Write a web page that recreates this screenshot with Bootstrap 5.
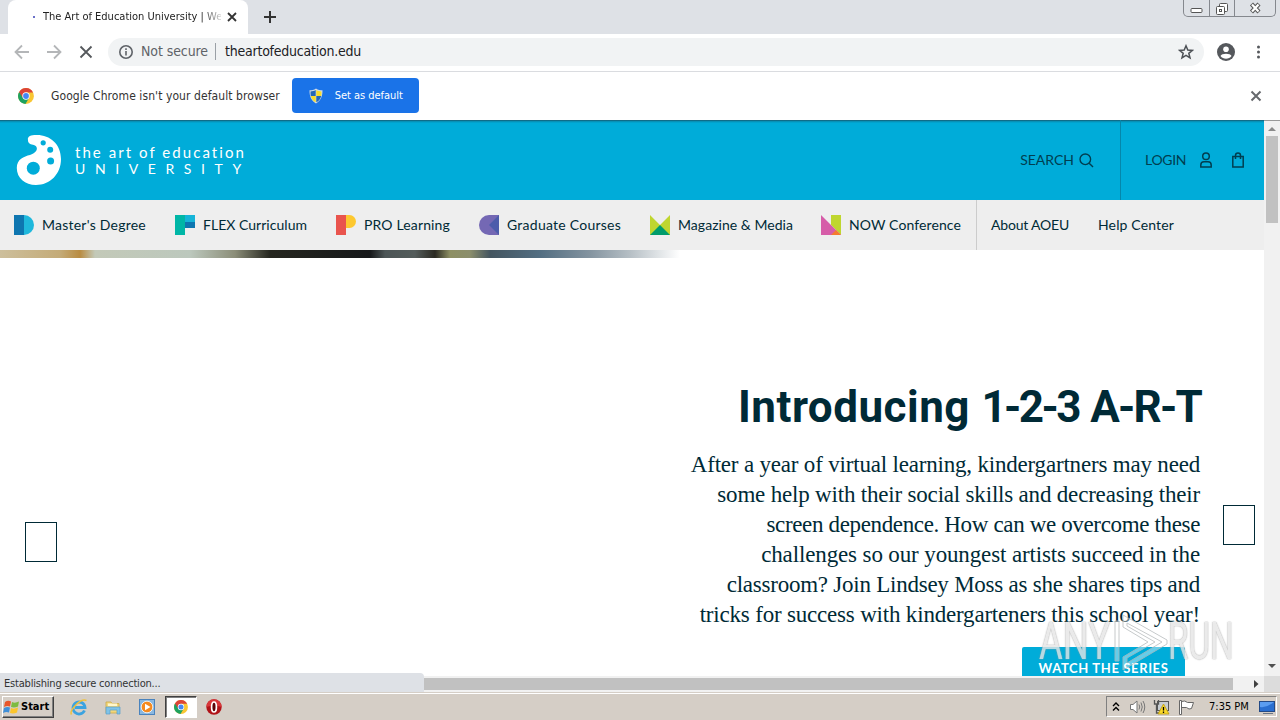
<!DOCTYPE html>
<html lang="en">
<head>
    <meta charset="UTF-8">
    <meta name="viewport" content="width=device-width, initial-scale=1.0">
    <title>The Art of Education University</title>
    <link href="https://cdn.jsdelivr.net/npm/bootstrap@5.3.0/dist/css/bootstrap.min.css" rel="stylesheet">
    <style>
        body {
            width: 1280px;
            height: 720px;
            overflow: hidden;
            background: #fff;
            font-family: "DejaVu Sans Condensed", "DejaVu Sans", sans-serif;
            font-size: 11px;
            line-height: 1.2;
            color: #222;
            white-space: nowrap;
        }
        svg { display: block; flex-shrink: 0; }

        /* browser window */
        .tab-strip { height: 34px; background: #dee1e6; }
        .browser-tab {
            width: 240px; height: 34px; margin-left: 8px; padding: 0 11px 0 25px;
            background: #fff; border-radius: 8px 8px 0 0;
        }
        .spinner-dot { width: 2px; height: 2px; background: #6a70c8; margin-right: 8px; }
        .tab-title {
            width: 178px; letter-spacing: 0;
            -webkit-mask-image: linear-gradient(90deg, #000 158px, transparent 182px);
        }
        .new-tab { margin: 11px 0 0 16px; }
        .win-buttons { height: 17px; width: 93px; margin-right: 4px; border: 1px solid #85888e; border-top: 0; border-radius: 0 0 5px 5px; }
        .win-buttons > div { display: flex; align-items: center; justify-content: center; width: 25px; }
        .win-buttons > div + div { border-left: 1px solid #85888e; }
        .win-buttons > div:last-child { flex: 1; }
        .tool-bar { height: 38px; border-bottom: 1px solid #dadce0; padding: 0 15px 2px 14px; }
        .address-bar { width: 1096px; height: 28px; border-radius: 14px; background: #f1f3f4; font-size: 14px; margin-left: 14px; padding: 0 10px; }
        .address-state { color: #5f6368; letter-spacing: -.09px; margin-left: 7px; padding-right: 7px; border-right: 1px solid #9aa0a6; }
        .address-url { color: #202124; letter-spacing: -.23px; margin-left: 9px; }
        .info-bar { height: 48px; font-size: 12px; padding: 0 18px 1px; letter-spacing: .08px; color: #333; }
        .info-bar span { margin-top: 1px; }
        .btn-default-browser {
            width: 127px; height: 35px; background: #1a73e8; color: #fff; border-radius: 4px;
            font-size: 11px; padding: 0 16px; margin-left: 12px; letter-spacing: -.04px;
        }

        /* page */
        .site-head {
            height: 80px; background: #00acd9; color: #003e50;
            box-shadow: inset 0 1px #106c88, inset 0 2px #0791b7, inset 0 3px #02a2cd;
            font-family: Lato, sans-serif; font-size: 14px; line-height: 17px; padding-left: 16px;
        }
        .brand-name { margin-left: 13px; color: #fff; padding-top: 1px; }
        .brand-top { letter-spacing: 2.05px; font-size: 15px; line-height: 17px; }
        .brand-bottom { letter-spacing: 9.6px; line-height: 16px; }
        .head-login { width: 144px; border-left: 1px solid #0587ab; padding-left: 24px; letter-spacing: -.3px; }
        .head-login span, .head-search span { margin-top: -1px; }
        .site-nav {
            height: 50px; background: #eee; color: #002a36; padding-left: 14px;
            font-family: Lato, sans-serif; font-size: 14px; line-height: 18px;
        }
        .site-nav a { color: inherit; text-decoration: none; display: flex; align-items: center; gap: 8px; margin-right: 29px; }
        .site-nav span { display: block; }
        .nav-masters { width: 104px; letter-spacing: .234px; }
        .nav-flex { width: 104px; letter-spacing: .03px; }
        .nav-pro { width: 86px; letter-spacing: .145px; }
        .nav-graduate { width: 114px; letter-spacing: .246px; }
        .nav-magazine { width: 114px; letter-spacing: .04px; }
        .nav-now { width: 113px; letter-spacing: .105px; }
        .nav-about { width: 78px; letter-spacing: -.2px; }
        .nav-help { letter-spacing: .146px; }
        .nav-rule { width: 1px; align-self: stretch; background: #ccc; margin: 0 14px 0 -15px; }
        .hero-strip {
            height: 8px;
            background: linear-gradient(90deg, #cdbf9c 0, #c4ab78 60px, #b98c42 80px, #c3c9b8 95px, #bcc8bd 190px, #8b8d78 235px, #25261f 270px, #16181a 370px, #4c5556 385px, #545c5b 415px, #2b2a22 435px, #8d8f63 450px, #8b8e6c 470px, #445560 490px, #536e82 540px, #8494a0 590px, #b6bfc5 630px, #fff 680px);
        }
        .hero-area { color: #002a36; height: 418px; overflow: hidden; padding-left: 25px; }
        .hero-title { font-family: Roboto, sans-serif; font-weight: 700; font-size: 44px; line-height: 50px; letter-spacing: .5px; margin: 124px 0 18px; }
        .title-digits { letter-spacing: -2.6px; }
        .title-letters { letter-spacing: -1.8px; margin-right: -1px; }
        .hero-text { font-family: "Liberation Serif", serif; font-size: 23px; line-height: 30px; letter-spacing: -.19px; margin-bottom: 17px; }
        .hero-text span { display: block; }
        .hero-text span:nth-child(3) { letter-spacing: -.35px; }
        .hero-text span:nth-child(4) { letter-spacing: -.13px; }
        .hero-text span:nth-child(5) { letter-spacing: -.24px; }
        .slide-arrow { width: 32px; height: 40px; border: 1px solid #002a36; }
        .slide-prev { margin-top: 264px; }
        .slide-next { margin: 247px 9px 0 23px; }
        .btn-series {
            width: 163px; height: 42px; background: #00acd9; color: #fff; border-radius: 2px; margin-right: 15px;
            font: 700 13px/43px Lato, sans-serif; letter-spacing: .63px; text-align: center;
        }
        .v-scroll { width: 16px; background: #f1f1f1; padding: 5px 0 7px; border-top: 1px solid #999; }
        .v-thumb { width: 12px; height: 87px; background: #c1c1c1; margin-top: 5px; }
        .h-scroll { height: 16px; background: #f1f1f1; }
        .h-thumb { width: 809px; height: 12px; background: #c1c1c1; margin-left: 424px; }
        .scroll-corner { width: 16px; height: 16px; background: #dcdcdc; margin-left: 5px; }
        .status-bubble { left: 0; top: 673px; width: 424px; height: 19px; background: #dee1e6; border-radius: 0 4px 0 0; padding: 4px; color: #333; letter-spacing: -.2px; }

        /* recorder watermark over the page */
        .recorder-mark { left: 1039px; top: 613px; height: 58px; opacity: .8; }
        .recorder-word {
            font: 400 52px/58px Roboto, sans-serif; color: rgba(255, 255, 255, .75);
            text-shadow: 0 0 2px #999, 0 0 1px #aaa; transform-origin: 0 50%;
        }
        .recorder-any { width: 75px; transform: scaleX(.7); }
        .recorder-run { width: 66px; transform: scaleX(.64); }

        /* desktop */
        .task-bar { height: 28px; background: #d5cec6; border-top: 1px solid #d5cec6; box-shadow: inset 0 1px #fff; color: #000; padding: 3px 3px 0 2px; }
        .start-button { width: 52px; height: 22px; border: 1px solid; border-color: #fff #404040 #404040 #fff; box-shadow: inset -1px -1px #808080; font-weight: 700; gap: 1px; }
        .quick-launch { height: 22px; margin-left: 16px; gap: 16px; }
        .task-active { width: 32px; height: 22px; margin: 0 9px; background: #fff; border: 1px solid; border-color: #404040 #fff #fff #404040; box-shadow: inset 1px 1px #808080; }
        .tray { width: 171px; height: 21px; border: 1px solid; border-color: #808080 #fff #fff #808080; padding: 0 0 0 5px; }
        .tray-clock { width: 41px; margin: 0 9px 0 14px; }
    </style>
</head>
<body class="d-flex flex-column">

<!-- Shared drawings -->
<svg width="0" height="0" class="position-absolute">
    <symbol id="chrome-logo" viewBox="0 0 20 20">
        <circle cx="10" cy="10" r="9.900" fill="#f9c633"/>
        <path d="M10 10 1.400 5A9.900 9.900 0 0 0 9.300 19.900L14 12.300Z" fill="#1da260"/>
        <path d="M10 5.500H18.800A9.900 9.900 0 0 0 1.400 5L6 12.300Z" fill="#dc4437"/>
        <circle cx="10" cy="10" r="4.600" fill="#fff"/>
        <circle cx="10" cy="10" r="3.600" fill="#4587f3"/>
    </symbol>
</svg>

<!-- Tab strip -->
<div class="tab-strip d-flex align-items-start">
    <div class="browser-tab d-flex align-items-center">
        <div class="spinner-dot"></div>
        <div class="tab-title">The Art of Education University | We</div>
        <svg class="ms-auto" width="10" height="10" stroke="#333" stroke-width="1.800"><path d="M1 1 9 9M9 1 1 9"/></svg>
    </div>
    <svg class="new-tab" width="12" height="12" stroke="#333" stroke-width="2"><path d="M6 0V12M0 6H12"/></svg>
    <div class="win-buttons d-flex ms-auto">
        <div><svg width="13" height="16" fill="#fff" stroke="#555"><rect x="1" y="8.500" width="11" height="4" rx="1"/></svg></div>
        <div><svg width="14" height="15" fill="#fff" stroke="#555"><rect x="4.500" y="2.500" width="8" height="8" rx="1"/><rect x="1.500" y="5.500" width="8" height="8" rx="1"/><rect x="4.500" y="8.500" width="2" height="2"/></svg></div>
        <div><svg width="13" height="14"><path d="M2.500 3 10 11M10 3 2.500 11" stroke="#555" stroke-width="4.200"/><path d="M3 3.500 9.500 10.500M9.500 3.500 3 10.500" stroke="#fff" stroke-width="2.200"/></svg></div>
    </div>
</div>

<!-- Toolbar -->
<div class="tool-bar d-flex align-items-center">
    <svg width="16" height="16" fill="none" stroke="#b4b6b8" stroke-width="1.800"><path d="M15 8H2M8 1.500 1.500 8 8 14.500"/></svg>
    <svg class="ms-3" width="16" height="16" fill="none" stroke="#b4b6b8" stroke-width="1.800"><path d="M1 8H14M8 1.500 14.500 8 8 14.500"/></svg>
    <svg class="ms-3" width="16" height="16" stroke="#55585c" stroke-width="1.800"><path d="M2.500 2.500 13.500 13.500M13.500 2.500 2.500 13.500"/></svg>
    <div class="address-bar d-flex align-items-center">
        <svg width="16" height="16" fill="none" stroke="#5f6368" stroke-width="1.600"><circle cx="8" cy="8" r="6.200"/><path d="M8 7V11.500M8 4.300V5.900"/></svg>
        <span class="address-state">Not secure</span>
        <span class="address-url">theartofeducation.edu</span>
        <svg class="ms-auto" width="16" height="16" fill="none" stroke="#4d5156" stroke-width="1.500"><path d="M8 1.800 9.800 6.100 14.300 6.400 10.800 9.300 12 13.800 8 11.300 4 13.800 5.200 9.300 1.700 6.400 6.200 6.100Z"/></svg>
    </div>
    <svg style="margin-left: 13px" width="18" height="18"><circle cx="9" cy="9" r="9" fill="#55585c"/><circle cx="9" cy="6.300" r="2.800" fill="#fff"/><path d="M3.500 13C4.500 10 13.500 10 14.500 13 12 16.500 6 16.500 3.500 13Z" fill="#fff"/></svg>
    <svg class="ms-auto" width="12" height="16" fill="#55585c"><circle cx="5.500" cy="3" r="1.500"/><circle cx="5.500" cy="8" r="1.500"/><circle cx="5.500" cy="13" r="1.500"/></svg>
</div>

<!-- Default browser prompt -->
<div class="info-bar d-flex align-items-center">
    <svg width="16" height="16" class="me-3"><use href="#chrome-logo"/></svg>
    <span style="margin-left: 1px">Google Chrome isn't your default browser</span>
    <div class="btn-default-browser d-flex align-items-center">
        <svg width="16" height="16"><path d="M8 .500C6 2 3.500 2.300 1.500 2.300 1.500 8.500 3 12.500 8 15.500 13 12.500 14.500 8.500 14.500 2.300 12.500 2.300 10 2 8 .500Z" fill="#cfdbe6"/><path d="M8.300 2V8H13.200C13.500 6.500 13.500 5 13.400 3.500 11.500 3.400 10 3 8.300 2ZM7.700 8H2.800C3.500 11 5 13 7.700 14.300Z" fill="#2467b8" transform="matrix(-1 0 0 1 16 0)"/><path d="M8.300 2V8H13.200C13.500 6.500 13.500 5 13.400 3.500 11.500 3.400 10 3 8.300 2ZM7.700 8H2.800C3.500 11 5 13 7.700 14.300Z" fill="#f8dc2c"/></svg>
        <span style="margin-left: 11px">Set as default</span>
    </div>
    <svg class="ms-auto" width="12" height="12" stroke="#66696d" stroke-width="2"><path d="M1.500 1.500 10.500 10.500M10.500 1.500 1.500 10.500"/></svg>
</div>

<!-- Page -->
<div class="d-flex">
    <div class="flex-grow-1">
        <header class="site-head d-flex align-items-center">
            <svg width="46" height="52">
                <path d="M12 6C11 2 16 .800 21 1 34 1 45 10 45 25 45 40 34 51 20 51 9 51 .800 44 .800 34 .800 25 8 22.500 14 21 19 19.500 22 16 20.500 13 19 10 15 11.500 13 9 12 8 12 7 12 6Z" fill="#fff"/>
                <g fill="#00acd9"><circle cx="17.300" cy="34.200" r="6.500"/><circle cx="34.600" cy="27" r="3.500"/><circle cx="34.200" cy="15.800" r="3"/><circle cx="27.200" cy="8.800" r="2.600"/></g>
            </svg>
            <div class="brand-name">
                <div class="brand-top">the art of education</div>
                <div class="brand-bottom">UNIVERSITY</div>
            </div>
            <div class="head-search ms-auto d-flex align-items-center">
                <span>SEARCH</span>
                <svg style="margin: 0 26px 0 5px" width="15" height="15" fill="none" stroke="currentColor" stroke-width="1.400"><circle cx="6.300" cy="6.300" r="5.300"/><path d="M10.200 10.200 14 14"/></svg>
            </div>
            <div class="head-login align-self-stretch d-flex align-items-center">
                <span>LOGIN</span>
                <svg style="margin-left: 14px" width="12" height="16" fill="none" stroke="currentColor" stroke-width="1.500"><circle cx="6" cy="4.300" r="3.300"/><path d="M.800 15V13Q.800 9.800 4 9.800H8Q11.200 9.800 11.200 13V15Z"/></svg>
                <svg style="margin-left: 20px" width="12" height="16" fill="none" stroke="currentColor" stroke-width="1.500"><path d="M.800 4.500H11.200V15H.800ZM3.500 7V3.500Q3.500 1 6 1 8.500 1 8.500 3.500V7"/></svg>
            </div>
        </header>

        <nav class="site-nav d-flex align-items-center">
            <a href="#"><svg width="20" height="20"><path d="M10 0A10 10 0 0 1 10 20Z" fill="#1fb8dc"/><path d="M0 0H10V20H0Z" fill="#0e76b0"/></svg><span class="nav-masters">Master's Degree</span></a>
            <a href="#"><svg width="20" height="20"><path d="M0 0H10V20H0Z" fill="#00b6a6"/><path d="M10 0H20V7H10Z" fill="#15b4d8"/><path d="M10 7H20V13H10Z" fill="#0e76b0"/></svg><span class="nav-flex">FLEX Curriculum</span></a>
            <a href="#"><svg width="20" height="20"><path d="M0 0H10V20H0Z" fill="#e9544d"/><path d="M10 0H13.500A6.500 6.500 0 0 1 13.500 13H10Z" fill="#fdc82f"/></svg><span class="nav-pro">PRO Learning</span></a>
            <a href="#"><svg width="20" height="20"><path d="M20 0V20H10A10 10 0 0 1 10 0Z" fill="#7468b4"/><path d="M20 0V20L10 10Z" fill="#4c5cab"/></svg><span class="nav-graduate">Graduate Courses</span></a>
            <a href="#"><svg width="20" height="20"><path d="M0 0 10 10 20 0V20H0Z" fill="#bfd62f"/><path d="M0 20 10 10 20 20Z" fill="#009b6b"/></svg><span class="nav-magazine">Magazine &amp; Media</span></a>
            <a href="#"><svg width="20" height="20"><path d="M10 0H20V20L10 10Z" fill="#bfd62f"/><path d="M0 0 20 20H0Z" fill="#d65ca8"/><path d="M15 15 20 20H10Z" fill="#f47b30"/></svg><span class="nav-now">NOW Conference</span></a>
            <div class="nav-rule"></div>
            <a href="#"><span class="nav-about">About AOEU</span></a>
            <a href="#"><span class="nav-help">Help Center</span></a>
        </nav>

        <div class="hero-strip"></div>
        <main class="hero-area d-flex align-items-start">
            <div class="slide-arrow slide-prev"></div>
            <section class="ms-auto d-flex flex-column align-items-end text-end">
                <h1 class="hero-title">Introducing <span class="title-digits">1-2-3</span> <span class="title-letters">A-R-T</span></h1>
                <div class="hero-text">
                    <span>After a year of virtual learning, kindergartners may need</span>
                    <span>some help with their social skills and decreasing their</span>
                    <span>screen dependence. How can we overcome these</span>
                    <span>challenges so our youngest artists succeed in the</span>
                    <span>classroom? Join Lindsey Moss as she shares tips and</span>
                    <span>tricks for success with kindergarteners this school year!</span>
                </div>
                <div class="btn-series">WATCH THE SERIES</div>
            </section>
            <div class="slide-arrow slide-next"></div>
        </main>
    </div>
    <div class="v-scroll d-flex flex-column align-items-center">
        <svg width="8" height="5" fill="#8a8a8a"><path d="M0 5 4 1 8 5Z"/></svg>
        <div class="v-thumb"></div>
        <svg class="mt-auto" width="8" height="5" fill="#505050"><path d="M0 0 4 4 8 0Z"/></svg>
    </div>
</div>
<div class="h-scroll d-flex align-items-center">
    <div class="h-thumb"></div>
    <svg class="ms-auto" width="5" height="8" fill="#404040"><path d="M0 0 4.500 4 0 8Z"/></svg>
    <div class="scroll-corner"></div>
</div>
<div class="status-bubble position-absolute">Establishing secure connection...</div>

<div class="recorder-mark position-absolute d-flex align-items-center">
    <div class="recorder-word recorder-any">ANY</div>
    <svg width="54" height="58" fill="rgba(255,255,255,.5)" stroke="#b8bcbe" stroke-width="1"><path d="M1 8H5V48H1ZM9 2 53 27V31L9 57V44L34 29 9 14ZM13 10V13L41 29 13 45V50L48 29Z" fill-rule="evenodd"/></svg>
    <div class="recorder-word recorder-run">RUN</div>
</div>

<!-- Taskbar -->
<div class="task-bar d-flex align-items-start">
    <div class="start-button d-flex align-items-center">
        <svg width="17" height="16"><path d="M2 3Q5 1 8 2.500L7 7.500Q4 6.500 1 8Z" fill="#e8562a"/><path d="M9 3Q12 4.500 16 2.500L15 7.500Q11.500 9 8 8Z" fill="#7dbb42"/><path d="M1 9Q4 7.500 7 8.500L6 13.500Q3 12.500 0 14Z" fill="#3f8fd8"/><path d="M8 9Q11 10.500 15 8.500L14 13.500Q10.500 15 7 14Z" fill="#fbc52c"/></svg>
        <span>Start</span>
    </div>
    <div class="quick-launch d-flex align-items-center">
        <svg width="18" height="17" fill="none"><path d="M14.500 11.500A6 6 0 1 1 15 8.500H5" stroke="#3ba3e0" stroke-width="2.800"/><path d="M1.500 15.500C-1 12 10-1 16.500 1.500" stroke="#f0c13c" stroke-width="1.500"/></svg>
        <svg width="18" height="17"><path d="M2 3H7L8 4.500H15V14H2Z" fill="#f3d77a" stroke="#caa94a" stroke-width=".800"/><path d="M2 8H16V15H13V11H6V15H2Z" fill="#7fc3e8" stroke="#5a9fc8" stroke-width=".700"/><path d="M4 4.500H13V7H4Z" fill="#fff6cc"/></svg>
        <svg width="18" height="17"><rect x="1.500" y=".500" width="15" height="15" fill="#8ab8e0" stroke="#4a83bd"/><circle cx="9" cy="8" r="5.800" fill="#f58a1f" stroke="#fff" stroke-width=".800"/><path d="M7 4.800 12.500 8 7 11.200Z" fill="#fff"/></svg>
    </div>
    <div class="task-active d-flex align-items-center justify-content-center"><svg width="14" height="14"><use href="#chrome-logo"/></svg></div>
    <svg style="margin-top: 3px" width="16" height="16"><circle cx="8" cy="8" r="7.700" fill="#b01318"/><path d="M8 .300A7.700 7.700 0 0 1 15.700 8Q8 5 .300 8A7.700 7.700 0 0 1 8 .300Z" fill="#d9373a"/><ellipse cx="8" cy="8" rx="2.400" ry="5" fill="#5c0508" stroke="#fff" stroke-width="1.700"/></svg>
    <div class="tray d-flex align-items-center ms-auto">
        <svg width="8" height="11" fill="none" stroke="#000" stroke-width="1.400"><path d="M1 5 4 2 7 5M1 9.500 4 6.500 7 9.500"/></svg>
        <svg style="margin-left: 9px" width="17" height="16" fill="none" stroke="#777"><path d="M1.500 5.500H4L8 2V14L4 10.500H1.500Z" fill="#fff"/><path d="M10 5.500Q11.500 8 10 10.500M12 3.500Q14.500 8 12 12.500M14 2Q17.500 8 14 14"/></svg>
        <svg style="margin-left: 7px" width="17" height="16"><rect x="4.500" y="2.500" width="11" height="9" fill="#c8cdd2" stroke="#555"/><path d="M1.500 1V5H5.500V1M3.500 5V14H8" fill="none" stroke="#555" stroke-width="1.300"/><path d="M10.500 5 16 15H5Z" fill="#fbd92b" stroke="#b99a10" stroke-width=".800"/><path d="M10.500 8V11.500M10.500 12.500V14" stroke="#000" stroke-width="1.300"/></svg>
        <svg style="margin-left: 8px" width="17" height="16" stroke="#666" fill="#fff"><path d="M1.500 1.500H3.500V15.500H1.500ZM3.500 2.500Q7 1 9.500 3.500L15.500 3.500 13.500 9.500Q11 11 8.500 8.500H3.500Z"/></svg>
        <span class="tray-clock">7:35 PM</span>
        <svg width="17" height="16"><rect x=".500" y="2.500" width="15" height="10" fill="#2a6fd0" stroke="#234a86"/><path d="M1 8Q8 9 15 3V3H1Z" fill="#5b9df0"/><path d="M4 14.500H14" stroke="#6b7685"/></svg>
    </div>
</div>

<script src="https://cdn.jsdelivr.net/npm/bootstrap@5.3.0/dist/js/bootstrap.bundle.min.js"></script>
</body>
</html>
